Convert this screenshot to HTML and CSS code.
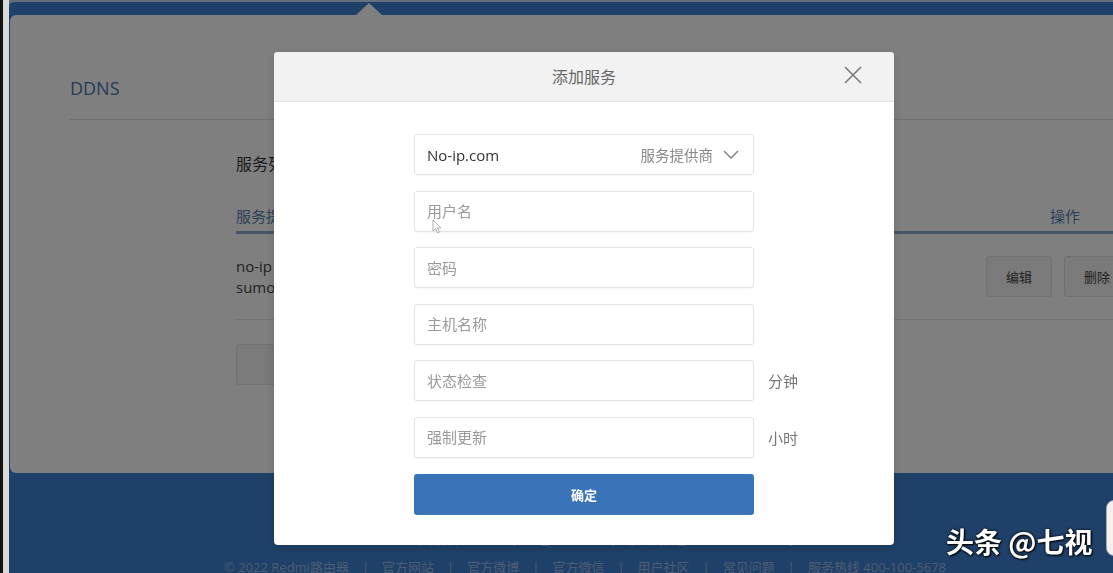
FILE: index.html
```html
<!DOCTYPE html>
<html lang="zh-CN">
<head>
  <meta charset="UTF-8">
  <title>DDNS - 添加服务</title>
  <link rel="stylesheet" href="styles.css">
</head>
<body>

  <div class="page">
    <div class="topbar"><span class="notch"></span></div>

    <div class="card">
      <h2 class="card-title">DDNS</h2>

      <div class="section">
        <h3>服务列表</h3>
        <div class="table">
          <div class="thead">
            <div>服务提供商</div>
            <div>状态</div>
            <div class="ops">操作</div>
          </div>
          <div class="row">
            <div>no-ip<br>sumoddns.ddns.net</div>
            <div>连接正常</div>
            <div class="ops-cell">
              <button class="btn">编辑</button>
              <button class="btn">删除</button>
            </div>
          </div>
        </div>
        <button class="btn btn-add">添加服务</button>
      </div>
    </div>

    <div class="footer">
      <p class="footer-info">MiWiFi 系统版本 1.0.48 &nbsp; 京ICP备10046444号 &nbsp; 京公网安备11010802020134号</p>
      <p class="footer-links">
        <span>© 2022 Redmi路由器</span><span class="sep">|</span>
        <span>官方网站</span><span class="sep">|</span>
        <span>官方微博</span><span class="sep">|</span>
        <span>官方微信</span><span class="sep">|</span>
        <span>用户社区</span><span class="sep">|</span>
        <span>常见问题</span><span class="sep">|</span>
        <span>服务热线 400-100-5678</span>
      </p>
    </div>
  </div>

  <div class="mask"></div>

  <div class="modal">
    <div class="modal-head">
      添加服务
      <svg class="close" viewBox="0 0 18 18"><path d="M1 1L17 17M17 1L1 17"/></svg>
    </div>
    <div class="modal-body">
      <div class="field">
        <div class="select">
          <span class="select-value">No-ip.com</span>
          <span class="select-label">服务提供商</span>
          <svg class="chevron" viewBox="0 0 16 9"><path d="M1 1L8 8L15 1"/></svg>
        </div>
      </div>
      <div class="field"><input class="input" type="text" placeholder="用户名"></div>
      <div class="field"><input class="input" type="password" placeholder="密码"></div>
      <div class="field"><input class="input" type="text" placeholder="主机名称"></div>
      <div class="field"><input class="input" type="text" placeholder="状态检查"><span class="unit">分钟</span></div>
      <div class="field"><input class="input" type="text" placeholder="强制更新"><span class="unit">小时</span></div>
      <button class="submit">确定</button>
    </div>
  </div>

  <svg class="cursor" viewBox="0 0 10 15"><path d="M1 1V12L3.6 9.6L5.6 14L7.4 13.2L5.4 8.9H9Z"/></svg>

  <div class="watermark">头条 @七视</div>
  <div class="side-tab"></div>

</body>
</html>
```

FILE: styles.css
```css
* {
  box-sizing: border-box;
}

html, body {
  height: 100%;
}

body {
  margin: 0;
  overflow: hidden;
  font-family: "Open Sans", "Noto Sans CJK SC", sans-serif;
  color: #333;
  background: linear-gradient(to right, #121212 0, #121212 3px, #d9d9d9 3px);
}

/* page behind the dialog */

.page {
  margin-left: 9px;
  background: #3e80d0;
  border-radius: 6px 0 0 0;
}

.topbar {
  position: relative;
  height: 15px;
  border-top: 2px solid #cddff6;
  border-radius: 6px 0 0 0;
}

.notch {
  position: absolute;
  left: 347px;
  bottom: 0;
  border-left: 13px solid transparent;
  border-right: 13px solid transparent;
  border-bottom: 12px solid #fff;
}

.card {
  height: 458px;
  margin-left: 1px;
  padding-top: 61px;
  background: #fff;
  border-radius: 6px 0 0 6px;
  overflow: hidden;
}

.card-title {
  margin: 0 0 0 60px;
  padding-bottom: 19px;
  border-bottom: 1px solid #dedede;
  font-size: 18px;
  line-height: 24px;
  font-weight: normal;
  color: #4a76b4;
}

.section {
  width: 910px;
  margin-left: 226px;
  padding-top: 33px;
}

.section h3 {
  margin: 0;
  font-size: 16px;
  line-height: 22px;
  font-weight: normal;
  color: #333;
}

.table {
  margin-top: 30px;
}

.thead,
.row {
  display: grid;
  grid-template-columns: 400px 350px 160px;
}

.thead {
  padding-bottom: 4px;
  border-bottom: 3px solid #8aa9d2;
  font-size: 15px;
  line-height: 22px;
  color: #5a7fb2;
}

.thead .ops {
  padding-left: 64px;
}

.row {
  height: 86px;
  align-items: center;
  border-bottom: 1px solid #e6e6e6;
  font-size: 15px;
  line-height: 21px;
  color: #444;
}

.ops-cell {
  display: flex;
  gap: 12px;
}

.btn {
  width: 66px;
  height: 41px;
  padding: 0;
  border: 1px solid #e2e2e2;
  border-radius: 3px;
  background: #f4f4f4;
  font-family: inherit;
  font-size: 13px;
  color: #444;
}

.btn-add {
  width: 170px;
  margin-top: 24px;
}

.footer {
  height: 120px;
  padding: 60px 0 0 48px;
  color: #98bce6;
}

.footer p {
  margin: 0;
  display: flex;
  justify-content: center;
}

.footer-info {
  font-size: 12px;
  line-height: 16px;
}

.footer-links {
  margin-top: 9px !important;
  gap: 13px;
  font-size: 13px;
  line-height: 18px;
}

/* dialog */

.mask {
  position: fixed;
  top: 0;
  left: 9px;
  right: 0;
  bottom: 0;
  background: rgba(0, 0, 0, 0.5);
}

.modal {
  position: fixed;
  left: 274px;
  top: 52px;
  width: 620px;
  background: #fff;
  border-radius: 4px;
  overflow: hidden;
  box-shadow: 0 2px 10px rgba(0, 0, 0, 0.15);
}

.modal-head {
  position: relative;
  height: 50px;
  background: #f2f2f2;
  border-bottom: 1px solid #e2e2e2;
  text-align: center;
  font-size: 16px;
  line-height: 50px;
  color: #666;
}

.close {
  position: absolute;
  right: 32px;
  top: 14px;
  width: 18px;
  height: 18px;
  fill: none;
  stroke: #7a7a7a;
  stroke-width: 1.6;
}

.modal-body {
  padding: 32px 0 30px 140px;
}

.field {
  display: flex;
  align-items: center;
  margin-bottom: 15.6px;
}

.input,
.select {
  width: 340px;
  height: 41px;
  padding: 0 12px;
  border: 1px solid #e3e3e3;
  border-radius: 3px;
  box-shadow: 0 1px 2px rgba(0, 0, 0, 0.04);
  font-family: inherit;
  font-size: 15px;
  color: #333;
  outline: none;
}

.input::placeholder {
  color: #9a9a9a;
}

.select {
  display: flex;
  align-items: center;
  padding-right: 14px;
}

.select-label {
  margin-left: auto;
  font-size: 14.5px;
  color: #888;
}

.chevron {
  width: 16px;
  height: 9px;
  margin-left: 10px;
  fill: none;
  stroke: #8a8a8a;
  stroke-width: 1.6;
}

.unit {
  margin-left: 14px;
  font-size: 15px;
  color: #777;
}

.submit {
  display: block;
  width: 340px;
  height: 41px;
  border: none;
  border-radius: 3px;
  background: #3b73b9;
  font-family: inherit;
  font-size: 13px;
  font-weight: bold;
  color: #fff;
}

.cursor {
  position: fixed;
  left: 432px;
  top: 219px;
  width: 10px;
  height: 15px;
  fill: #fff;
  stroke: #999;
  stroke-width: 0.8;
}

/* video overlay */

.watermark {
  position: fixed;
  left: 946px;
  top: 521px;
  font-family: "Noto Sans CJK SC", sans-serif;
  font-size: 28px;
  font-weight: bold;
  line-height: 40px;
  color: #fff;
  text-shadow: 1px 1px 2px #000, 0 0 3px #000;
}

.side-tab {
  position: fixed;
  left: 1106px;
  top: 500px;
  width: 24px;
  height: 56px;
  border: 1px solid #aaa;
  border-radius: 8px;
  background: #f2f2f2;
}
```
